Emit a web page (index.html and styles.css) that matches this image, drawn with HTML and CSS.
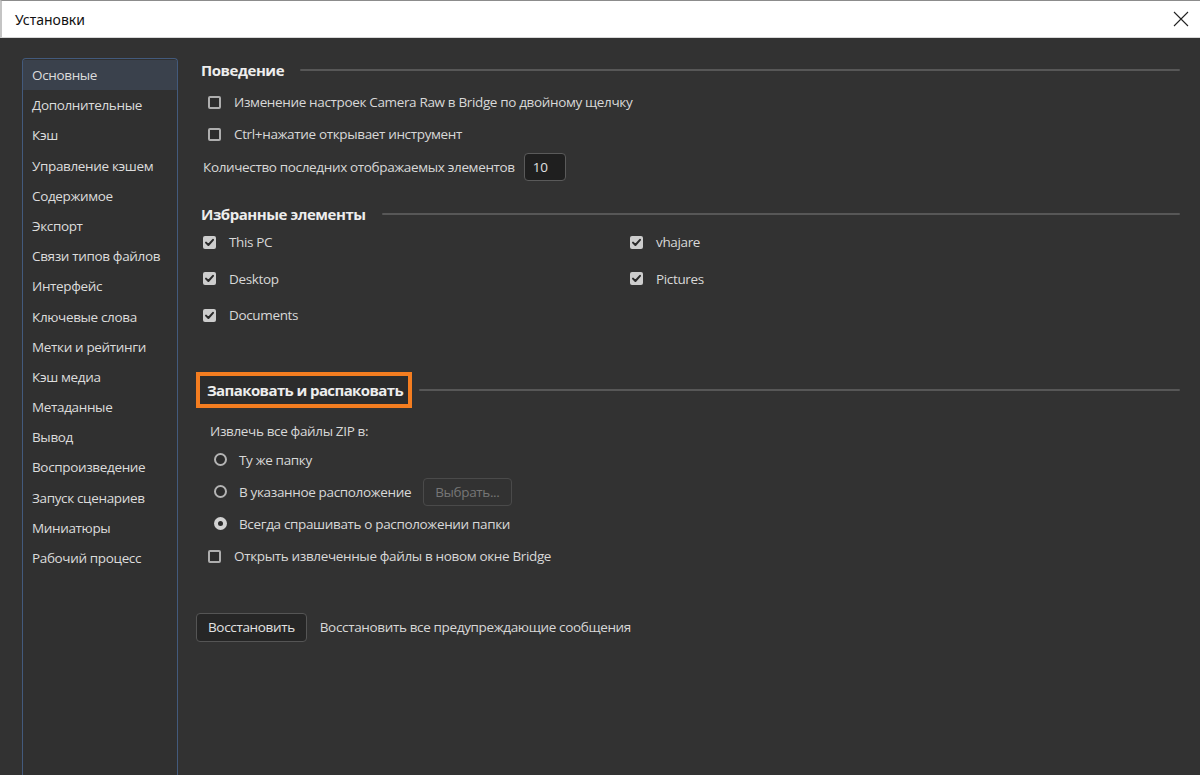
FILE: index.html
```html
<!DOCTYPE html>
<html lang="ru">
<head>
<meta charset="utf-8">
<title>Установки</title>
<link rel="stylesheet" href="styles.css">
</head>
<body>
<div class="window">
  <header class="titlebar">
    <span class="title">Установки</span>
    <svg class="close" width="16" height="16" viewBox="0 0 16 16"><path d="M1 1L15 15M15 1L1 15" stroke="#222" stroke-width="1.1" fill="none"/></svg>
  </header>
  <div class="body">
    <nav class="sidebar">
      <div class="nav-item active">Основные</div>
      <div class="nav-item">Дополнительные</div>
      <div class="nav-item">Кэш</div>
      <div class="nav-item">Управление кэшем</div>
      <div class="nav-item">Содержимое</div>
      <div class="nav-item">Экспорт</div>
      <div class="nav-item">Связи типов файлов</div>
      <div class="nav-item">Интерфейс</div>
      <div class="nav-item">Ключевые слова</div>
      <div class="nav-item">Метки и рейтинги</div>
      <div class="nav-item">Кэш медиа</div>
      <div class="nav-item">Метаданные</div>
      <div class="nav-item">Вывод</div>
      <div class="nav-item">Воспроизведение</div>
      <div class="nav-item">Запуск сценариев</div>
      <div class="nav-item">Миниатюры</div>
      <div class="nav-item">Рабочий процесс</div>
    </nav>
    <main class="content">
      <section class="group">
        <div class="group-head head-behavior"><h2>Поведение</h2><span class="rule"></span></div>
        <label class="row check-row first-row"><span class="box"></span>Изменение настроек Camera Raw в Bridge по двойному щелчку</label>
        <label class="row check-row"><span class="box"></span>Ctrl+нажатие открывает инструмент</label>
        <div class="row count-row"><span>Количество последних отображаемых элементов</span><span class="num-input">10</span></div>
      </section>

      <section class="group">
        <div class="group-head head-fav"><h2>Избранные элементы</h2><span class="rule"></span></div>
        <div class="fav-grid">
          <label class="fav"><span class="box checked"><svg width="13" height="13" viewBox="0 0 13 13"><path d="M3 6.6L5.4 9L10 3.8" stroke="#2a2a2a" stroke-width="2" fill="none" stroke-linecap="round" stroke-linejoin="round"/></svg></span>This PC</label>
          <label class="fav"><span class="box checked"><svg width="13" height="13" viewBox="0 0 13 13"><path d="M3 6.6L5.4 9L10 3.8" stroke="#2a2a2a" stroke-width="2" fill="none" stroke-linecap="round" stroke-linejoin="round"/></svg></span>vhajare</label>
          <label class="fav"><span class="box checked"><svg width="13" height="13" viewBox="0 0 13 13"><path d="M3 6.6L5.4 9L10 3.8" stroke="#2a2a2a" stroke-width="2" fill="none" stroke-linecap="round" stroke-linejoin="round"/></svg></span>Desktop</label>
          <label class="fav"><span class="box checked"><svg width="13" height="13" viewBox="0 0 13 13"><path d="M3 6.6L5.4 9L10 3.8" stroke="#2a2a2a" stroke-width="2" fill="none" stroke-linecap="round" stroke-linejoin="round"/></svg></span>Pictures</label>
          <label class="fav"><span class="box checked"><svg width="13" height="13" viewBox="0 0 13 13"><path d="M3 6.6L5.4 9L10 3.8" stroke="#2a2a2a" stroke-width="2" fill="none" stroke-linecap="round" stroke-linejoin="round"/></svg></span>Documents</label>
        </div>
      </section>

      <section class="group">
        <div class="group-head head-zip"><h2 class="highlight">Запаковать и распаковать</h2><span class="rule"></span></div>
        <div class="row extract-label">Извлечь все файлы ZIP в:</div>
        <label class="row radio-row"><span class="radio"></span>Ту же папку</label>
        <label class="row radio-row"><span class="radio"></span>В указанное расположение<span class="btn disabled">Выбрать...</span></label>
        <label class="row radio-row"><span class="radio selected"></span>Всегда спрашивать о расположении папки</label>
        <label class="row check-row open-row"><span class="box"></span>Открыть извлеченные файлы в новом окне Bridge</label>
      </section>

      <div class="reset-row">
        <span class="btn">Восстановить</span>
        <span>Восстановить все предупреждающие сообщения</span>
      </div>
    </main>
  </div>
</div>
</body>
</html>
```
FILE: styles.css
```css
* { box-sizing: border-box; }
html, body { margin: 0; padding: 0; }
body {
  width: 1200px;
  height: 775px;
  overflow: hidden;
  background: #323232;
  font-family: "Open Sans", "Noto Sans", sans-serif;
  font-size: 13.5px;
  letter-spacing: -0.35px;
  color: #d8d8d8;
}
.window {
  display: flex;
  flex-direction: column;
  height: 775px;
}
.titlebar {
  height: 38px;
  flex: none;
  display: flex;
  align-items: center;
  justify-content: space-between;
  background: #ffffff;
  border-top: 1px solid #8c8c8c;
  border-left: 2px solid #c4c4c4;
  border-bottom: 1px solid #d8d8d8;
  padding: 0 11px 0 13px;
  color: #111;
  font-family: "Noto Sans", "Open Sans", sans-serif;
  font-size: 14px;
  letter-spacing: 0;
}
.close { display: block; }
.body {
  flex: 1;
  display: flex;
  padding: 20px 20px 0 22px;
  min-height: 0;
}
.sidebar {
  width: 156px;
  flex: none;
  border: 1px solid #435a7c;
  border-bottom: none;
  border-radius: 4px 4px 0 0;
  padding-top: 1px;
  background: #303030;
}
.nav-item {
  height: 30.2px;
  line-height: 30px;
  padding-left: 9px;
  color: #dcdcdc;
  white-space: nowrap;
}
.nav-item.active { background: #3a414c; }

.content {
  flex: 1;
  padding-left: 18px;
  display: flex;
  flex-direction: column;
}
.group-head {
  display: flex;
  align-items: center;
  height: 24px;
}
.group-head h2 {
  margin: 0;
  font-size: 15px;
  font-weight: 700;
  letter-spacing: -0.45px;
  color: #ededed;
  white-space: nowrap;
}
.rule {
  flex: 1;
  height: 2px;
  background: #575757;
  border-radius: 1px;
  margin-left: 16px;
}
.head-behavior { padding-left: 5px; }
.head-fav { padding-left: 5px; margin-top: 19px; height: 22px; }
.head-zip { margin-top: 38px; height: 36px; }
.head-zip .rule { margin-left: 7px; }
.highlight {
  border: 4px solid #f47d20;
  height: 36px;
  line-height: 28px;
  padding: 0 5px 0 7px;
  background: #2c2c2c;
  letter-spacing: -0.6px !important;
}

.row {
  display: flex;
  align-items: center;
  white-space: nowrap;
}
.check-row { height: 32px; padding-left: 12px; }
.first-row { margin-top: 4px; }
.check-row .box { margin-right: 13px; }
.count-row { height: 34px; padding-left: 7px; }
.num-input {
  margin-left: 9px;
  width: 42px;
  height: 28px;
  line-height: 26px;
  border: 1px solid #5a5a5a;
  border-radius: 4px;
  background: #1f1f1f;
  padding-left: 8px;
  color: #e0e0e0;
}
.box {
  width: 13px;
  height: 13px;
  flex: none;
  border: 2px solid #aeaeae;
  border-radius: 2px;
  background: #2c2c2c;
  display: inline-flex;
  align-items: center;
  justify-content: center;
}
.box.checked {
  border: none;
  background: #cdcdcd;
}
.box svg { display: block; }

.fav-grid {
  display: grid;
  grid-template-columns: 427px 1fr;
  grid-auto-rows: 36.5px;
  padding-left: 7px;
  margin-top: -1px;
}
.fav {
  display: flex;
  align-items: center;
}
.fav .box { margin-right: 13px; }

.extract-label { height: 26px; padding-left: 14px; margin-top: 10px; }
.radio-row { height: 32px; padding-left: 18px; }
.radio {
  width: 13px;
  height: 13px;
  flex: none;
  border: 2.5px solid #b4b4b4;
  border-radius: 50%;
  margin-right: 12px;
  background: #2c2c2c;
  position: relative;
}
.radio.selected {
  border: none;
  background: #d2d2d2;
}
.radio.selected::after {
  content: "";
  position: absolute;
  left: 4px;
  top: 4px;
  width: 5px;
  height: 5px;
  border-radius: 50%;
  background: #2a2a2a;
}
.btn {
  display: inline-flex;
  align-items: center;
  height: 29px;
  padding: 0 11px;
  border: 1px solid #555;
  border-radius: 4px;
  background: #262626;
  color: #e2e2e2;
}
.btn.disabled {
  margin-left: 12px;
  height: 28px;
  background: transparent;
  border-color: #4a4a4a;
  color: #767676;
}
.open-row { height: 33px; }

.reset-row {
  display: flex;
  align-items: center;
  gap: 13px;
  margin-top: 40px;
  white-space: nowrap;
}
```
